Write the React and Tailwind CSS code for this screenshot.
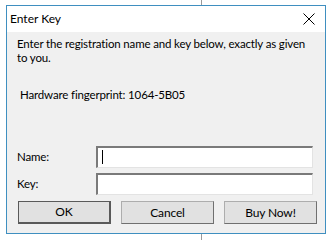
import React from 'react';

const font = { fontFamily: 'Lato, "Liberation Sans", Arial, sans-serif' };

const Button = ({ label, primary }) => (
  <button
    className={`w-[93px] h-[23px] text-[12px] text-black bg-[#e1e1e1] border ${
      primary ? 'border-[#5a5a5a] border-b-2 border-r-2' : 'border-[#adadad] border-b-[#707070] border-r-[#707070]'
    }`}
  >
    {label}
  </button>
);

const Field = ({ label, caret }) => (
  <div className="flex items-center h-[22px]">
    <span className="w-[79px]">{label}</span>
    <div className="relative w-[217px] h-[22px] bg-white border-t-2 border-l-2 border-[#7a7a7a] border-b border-r border-b-[#e3e3e3] border-r-[#e3e3e3]">
      {caret && <div className="absolute left-[4px] top-[2px] w-px h-[14px] bg-black" />}
    </div>
  </div>
);

export default function App() {
  return (
    <div className="relative w-[332px] h-[240px] bg-white overflow-hidden" style={font}>
      <div className="absolute left-[201px] top-0 w-px h-[240px] bg-[#9a9a9a]" />
      <div className="relative ml-[6px] pt-[5px]">
        <div className="w-[320px] h-[229px] border border-[#3f8fc0] bg-[#f0f0f0] flex flex-col">
          <div className="shrink-0 h-[26px] bg-white flex items-center justify-between pl-[3px] pr-[10px]">
            <span className="text-[12px] text-black">Enter Key</span>
            <svg width="12" height="12" viewBox="0 0 12 12">
              <path d="M0.5 0.5 L11.5 11.5 M11.5 0.5 L0.5 11.5" stroke="#000" strokeWidth="1" />
            </svg>
          </div>
          <div className="flex flex-col pl-[10px] text-black text-[11.5px] tracking-[-0.15px]">
            <p className="mt-[5px] leading-[14px] whitespace-nowrap">
              Enter the registration name and key below, exactly as given
              <br />
              to you.
            </p>
            <p className="mt-[23px] ml-[3px] leading-[14px] whitespace-nowrap">Hardware fingerprint: 1064-5B05</p>
            <div className="mt-[44px] flex flex-col gap-[5px]">
              <Field label="Name:" caret />
              <Field label="Key:" />
            </div>
            <div className="mt-[6px] ml-[1px] flex gap-[10px]">
              <Button label="OK" primary />
              <Button label="Cancel" />
              <Button label="Buy Now!" />
            </div>
          </div>
        </div>
      </div>
    </div>
  );
}
